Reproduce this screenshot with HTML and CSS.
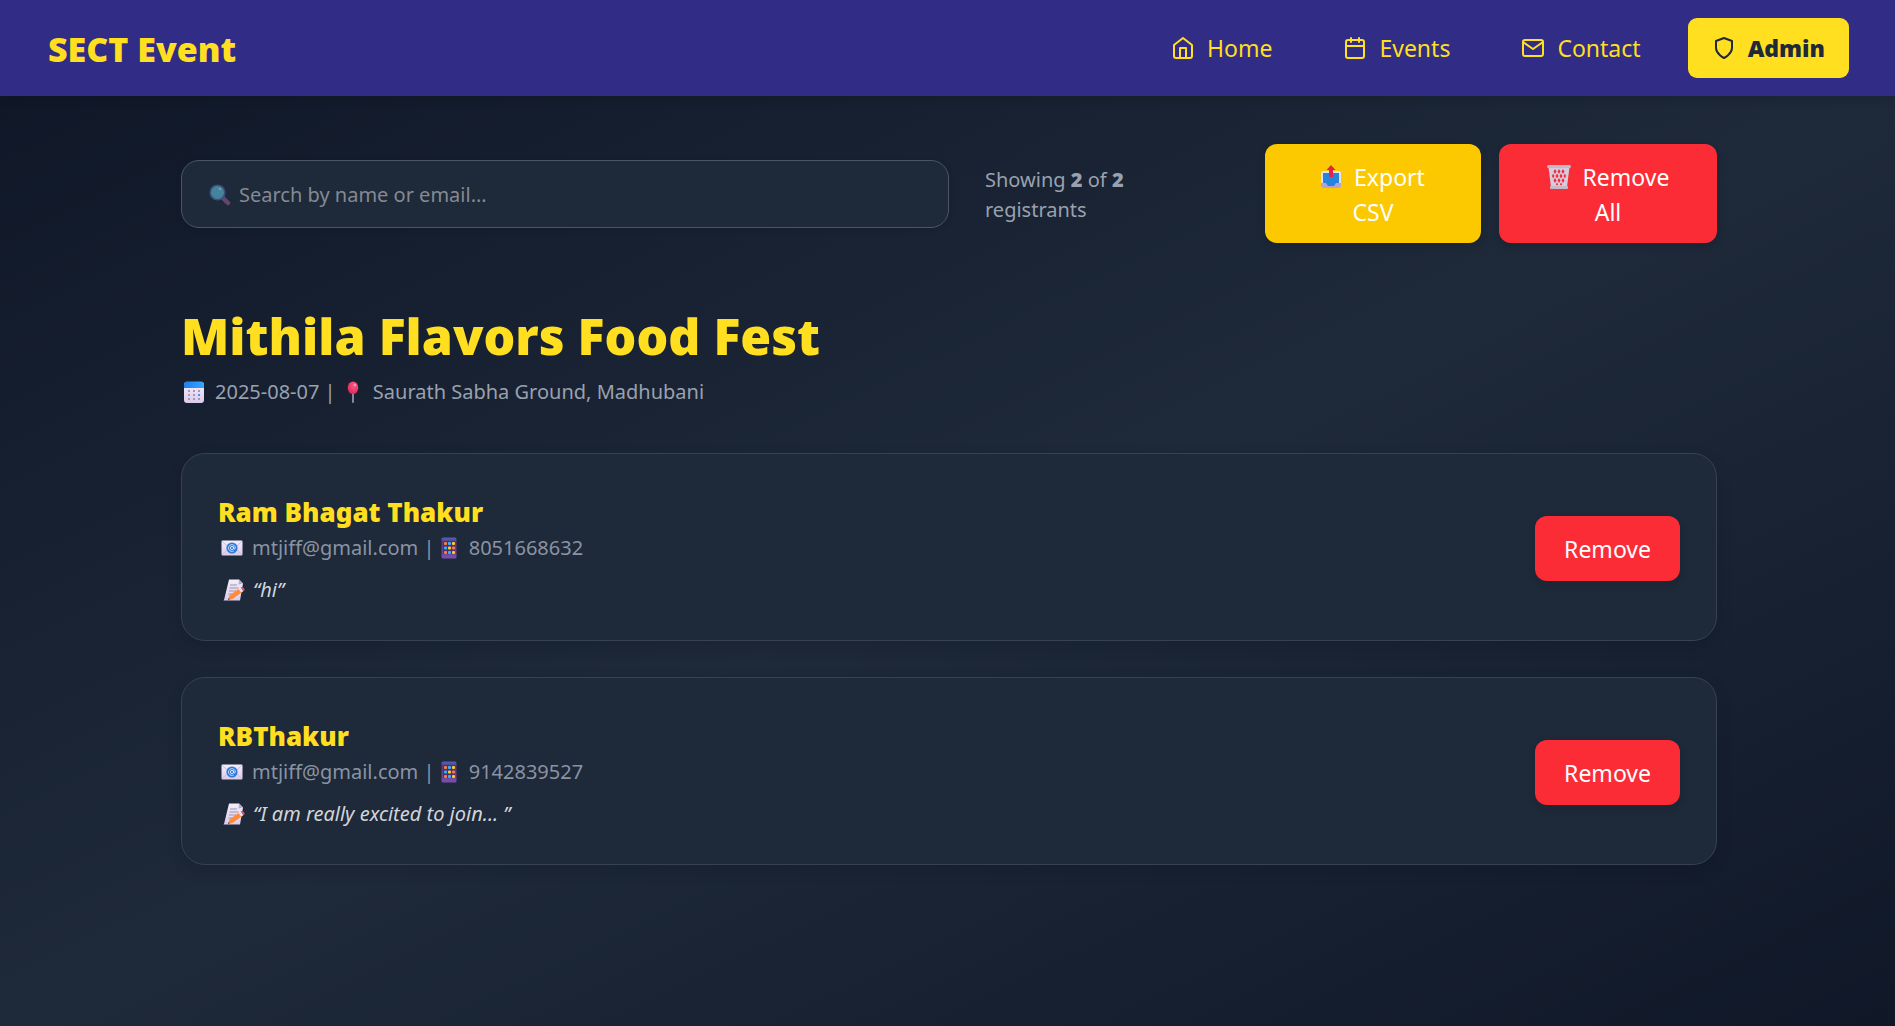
FILE: index.html
```html
<!DOCTYPE html>
<html lang="en">
<head>
<meta charset="utf-8">
<meta name="viewport" content="width=device-width, initial-scale=1">
<title>SECT Event – Registrants</title>
<link rel="stylesheet" href="styles.css">
</head>
<body>
<svg class="sprite" aria-hidden="true">
  <defs>
    <linearGradient id="calTop"><stop offset="0" stop-color="#1f7df0"/><stop offset="1" stop-color="#35a8ff"/></linearGradient>
    <linearGradient id="paper" x2="0" y2="1"><stop offset="0" stop-color="#f4eefb"/><stop offset="1" stop-color="#dccbec"/></linearGradient>
    <linearGradient id="phone" x2="0" y2="1"><stop offset="0" stop-color="#5362b8"/><stop offset=".25" stop-color="#5a3a78"/><stop offset="1" stop-color="#7a4fae"/></linearGradient>
    <radialGradient id="pin" cx=".6" cy=".3" r=".8"><stop offset="0" stop-color="#ff5a86"/><stop offset="1" stop-color="#dc1f58"/></radialGradient>
  </defs>
  <symbol id="mail" viewBox="0 0 22 16">
    <rect x=".5" y=".5" width="21" height="15" rx="1" fill="url(#paper)"/>
    <path d="M1 1l7 7M21 1l-7 7M1 15l6-6M21 15l-6-6" stroke="#c9b7dc" stroke-width=".8"/>
    <circle cx="11" cy="8" r="5.6" fill="#2f7bd8"/>
    <circle cx="11" cy="8" r="1.6" fill="none" stroke="#d5e4fa"/>
    <path d="M12.6 6.4v2.2q1.7 1 1.7-.6a3.4 3.4 0 1 0-1.6 2.9" fill="none" stroke="#d5e4fa" stroke-width=".9"/>
  </symbol>
  <symbol id="mobile" viewBox="0 0 16 22">
    <rect x=".5" y=".5" width="15" height="21" rx="1.5" fill="url(#phone)"/>
    <rect x="2" y="4" width="12" height="13" fill="#4e2f68"/>
    <g><rect x="3" y="5" width="3" height="3" rx="1" fill="#ff7b45"/><rect x="7" y="5" width="3" height="3" rx="1" fill="#2fb4ff"/><rect x="11" y="5" width="3" height="3" rx="1" fill="#ffc93d"/><rect x="3" y="9.500" width="3" height="3" rx="1" fill="#2fb4ff"/><rect x="7" y="9.500" width="3" height="3" rx="1" fill="#ffc93d"/><rect x="11" y="9.500" width="3" height="3" rx="1" fill="#ff7b45"/><rect x="3" y="14" width="3" height="3" rx="1" fill="#ff7b45"/><rect x="7" y="14" width="3" height="3" rx="1" fill="#2fb4ff"/><rect x="11" y="14" width="3" height="3" rx="1" fill="#ffc93d"/></g>
  </symbol>
  <symbol id="memo" viewBox="0 0 22 22">
    <path d="M6 .5h10l4 4L17 21.500H.5Q1.500 20 2 17Z" fill="url(#paper)"/>
    <path d="M16 .5l4 4-4.500 1Z" fill="#b9a9c8"/>
    <path d="M7 6h7M6.500 9h9M6 12h7M5.500 15h4" stroke="#9d93a8" stroke-width="1.200"/>
    <path d="M5 21l1.500-4.500 9-6.500 3 3.500-9 6.500Z" fill="#ff8a3a"/>
    <path d="M15.500 10l2-1.500 3 3.500-2 1.500Z" fill="#e8e2f0"/>
    <path d="M17.500 8.500l1.500-.5q3 1 2.500 3.500l-1 .5Z" fill="#ff4b4b"/>
    <path d="M5 21l.6-2 1.200 1.300Z" fill="#6b3a48"/>
  </symbol>
</svg>

<header class="navbar">
  <a class="brand" href="#">SECT Event</a>
  <nav class="nav">
    <a class="nav-link" href="#"><svg class="nav-icon" viewBox="0 0 24 24"><path d="M3 9l9-7 9 7v11a2 2 0 0 1-2 2H5a2 2 0 0 1-2-2z"/><path d="M9 22V12h6v10"/></svg>Home</a>
    <a class="nav-link" href="#"><svg class="nav-icon" viewBox="0 0 24 24"><rect x="3" y="4" width="18" height="18" rx="2"/><path d="M16 2v4M8 2v4M3 10h18"/></svg>Events</a>
    <a class="nav-link" href="#"><svg class="nav-icon" viewBox="0 0 24 24"><rect x="2" y="4" width="20" height="16" rx="2"/><path d="M22 6l-10 7L2 6"/></svg>Contact</a>
    <a class="nav-link nav-admin" href="#"><svg class="nav-icon" viewBox="0 0 24 24"><path d="M12 22s8-4 8-10V5l-8-3-8 3v7c0 6 8 10 8 10z"/></svg>Admin</a>
  </nav>
</header>

<main class="page">
  <div class="container">
    <div class="toolbar">
      <label class="search">
        <svg class="search-icon" viewBox="0 0 22 22" aria-hidden="true"><path d="M14 14l5 5" stroke="#8f5b91" stroke-width="4.500" stroke-linecap="round"/><circle cx="8.500" cy="8.500" r="7.300" fill="#5fc0dc" stroke="#4a6ba8" stroke-width="1.600"/><circle cx="11" cy="5" r="1.300" fill="#b4e6f2"/></svg>
        <input class="search-input" type="text" placeholder="Search by name or email..." aria-label="Search by name or email">
      </label>
      <p class="count">Showing <strong>2</strong> of <strong>2</strong> registrants</p>
      <div class="actions">
        <button class="btn btn-export" type="button"><svg class="emoji emoji-tray" viewBox="2 0 20 24" aria-hidden="true"><rect x="2" y="6" width="20" height="17" rx="2" fill="#e6e0ee"/><path d="M2 18h20v3q0 2-2 2H4q-2 0-2-2Z" fill="#b7a2cf"/><path d="M4 8h16v10h-3l-2 3H9l-2-3H4Z" fill="#2585dc"/><path d="M12 0l4.500 5H14v7h-4V5H7.500Z" fill="#e0244f"/></svg>Export CSV</button>
        <button class="btn btn-remove-all" type="button"><svg class="emoji emoji-bin" viewBox="0 0 24 24" aria-hidden="true"><path d="M1.500 2h21l-2.500 20H4Z" fill="#d6ccdc"/><g fill="#f02c40"><path d="M8 4l1.500 2.500L8 9 6.500 6.500ZM12 4l1.500 2.500L12 9l-1.500-2.500ZM16 4l1.500 2.500L16 9l-1.500-2.500Z"/><path d="M6 8.500L7.500 11 6 13.500 5 11ZM10 8.500l1.500 2.500-1.500 2.500L8.500 11ZM14 8.500l1.500 2.500-1.500 2.500-1.500-2.500ZM18 8.500l1 2.500-1 2.500-1.500-2.500Z"/><path d="M8 13l1.500 2.500L8 18l-1.500-2.500ZM12 13l1.500 2.500L12 18l-1.500-2.500ZM16 13l1.500 2.500L16 18l-1.500-2.500Z"/><path d="M10 17.500l1.200 2-1.200 1-1.200-1ZM14 17.500l1.200 2-1.200 1-1.200-1Z"/></g><rect x="0" y="0" width="24" height="3" rx="1.500" fill="#c2bac8"/><rect x="3" y="21" width="18" height="3" rx="1" fill="#c2bac8"/></svg>Remove All</button>
      </div>
    </div>

    <section>
      <h1 class="title">Mithila Flavors Food Fest</h1>
      <p class="meta"><svg class="emoji emoji-cal" viewBox="0 0 22 22" aria-hidden="true"><rect x="1" y="1" width="20" height="21" rx="3" fill="url(#paper)"/><path d="M1 7V4q0-3.500 3-3.500h14q3 0 3 3.500v3Z" fill="url(#calTop)"/><g fill="#a596b8"><path d="M5 9h2v2H5zM10 9h2v2h-2zM15 9h2v2h-2zM5 13h2v2H5zM10 13h2v2h-2zM5 17h2v2H5zM10 17h2v2h-2zM15 17h2v2h-2z"/></g><path d="M15 13h2v2h-2z" fill="#2f9bff"/></svg>2025-08-07 | <svg class="emoji emoji-pin" viewBox="0 0 14 22" aria-hidden="true"><path d="M7 12v9" stroke="#9a92a8" stroke-width="1.800" stroke-linecap="round"/><ellipse cx="7" cy="6.800" rx="5.300" ry="6.300" fill="url(#pin)"/><circle cx="9" cy="4" r="1.300" fill="#ff9db5"/></svg>Saurath Sabha Ground, Madhubani</p>

      <ul class="cards">
        <li class="card">
          <div>
            <h2 class="name">Ram Bhagat Thakur</h2>
            <p class="contact"><svg class="emoji emoji-mail"><use href="#mail"/></svg>mtjiff@gmail.com | <svg class="emoji emoji-mobile"><use href="#mobile"/></svg>8051668632</p>
            <p class="note"><svg class="emoji emoji-memo"><use href="#memo"/></svg>“hi”</p>
          </div>
          <button class="btn btn-remove" type="button">Remove</button>
        </li>
        <li class="card">
          <div>
            <h2 class="name">RBThakur</h2>
            <p class="contact"><svg class="emoji emoji-mail"><use href="#mail"/></svg>mtjiff@gmail.com | <svg class="emoji emoji-mobile"><use href="#mobile"/></svg>9142839527</p>
            <p class="note"><svg class="emoji emoji-memo"><use href="#memo"/></svg>“I am really excited to join... ”</p>
          </div>
          <button class="btn btn-remove" type="button">Remove</button>
        </li>
      </ul>
    </section>
  </div>
</main>
</body>
</html>
```
FILE: styles.css
```css
*, *::before, *::after { box-sizing: border-box; }

body {
  margin: 0;
  min-height: 100vh;
  display: flex;
  flex-direction: column;
  background: #101828;
  color: #fff;
  font-family: "Segoe UI", "Noto Sans", "Open Sans", sans-serif;
  font-size: 20px;
  line-height: 30px;
}

h1, h2, p, ul { margin: 0; padding: 0; }
a { color: inherit; text-decoration: none; }
.sprite { position: absolute; width: 0; height: 0; }

.navbar {
  display: flex;
  align-items: center;
  justify-content: space-between;
  min-height: 96px;
  padding: 18px 46px 18px 48px;
  background: #312c85;
  color: #ffdf20;
  box-shadow: 0 4px 9px rgba(0, 0, 0, .1);
  position: relative;
}
.brand { padding-top: 2px; font-size: 34px; line-height: 48px; font-weight: 900; }
.nav { display: flex; gap: 23px; }
.nav-link {
  display: flex;
  align-items: center;
  gap: 12px;
  padding: 12px 24px;
  border-radius: 9px;
  font-size: 23px;
  line-height: 36px;
}
.nav-admin { background: #ffdf20; color: #1e2939; font-weight: 900; }
.nav-icon {
  width: 24px;
  height: 24px;
  fill: none;
  stroke: currentColor;
  stroke-width: 2;
  stroke-linecap: round;
  stroke-linejoin: round;
}

.page {
  flex: 1;
  padding: 48px 24px 48px 27px;
  background: linear-gradient(to bottom right, #101828, #1e2939, #101828);
}
.container { max-width: 1536px; margin: 0 auto; }

.toolbar { display: flex; align-items: center; gap: 36px; }
.search {
  flex: 0 0 50%;
  display: flex;
  align-items: center;
  gap: 8px;
  height: 68px;
  padding: 2px 27px 0;
  border: 1px solid #4a5565;
  border-radius: 18px;
  background: #1e2939;
  box-shadow: 0 2px 6px rgba(0, 0, 0, .1);
}
.search-icon { width: 22px; height: 22px; opacity: .6; }
.search-input {
  flex: 1;
  min-width: 0;
  padding: 0;
  border: 0;
  outline: 0;
  background: none;
  color: #fff;
  font: inherit;
}
.search-input::placeholder { color: #848a94; opacity: 1; }
.count { flex: 1; padding: 2px 60px 0 0; color: #99a1af; }
.count strong { font-weight: 900; }
.actions { display: flex; gap: 18px; }

.btn {
  border: 0;
  border-radius: 12px;
  color: #fff;
  font: inherit;
  font-size: 23px;
  line-height: 35px;
  box-shadow: 0 3px 8px rgba(0, 0, 0, .12);
  cursor: pointer;
}
.btn-export { width: 216px; padding: 16px 36px 13px; background: #fcc800; }
.btn-remove-all { width: 218px; padding: 16px 36px 13px; background: #fb2c36; }
.btn-remove { padding: 16px 29px 14px; background: #fb2c36; }

.title {
  margin-top: 60px;
  color: #ffdf20;
  font-size: 50px;
  line-height: 66px;
  font-weight: 900;
}
.meta { margin-top: 8px; color: #99a1af; }

.emoji { height: 22px; vertical-align: -4px; }
.emoji-tray { width: 20px; height: 24px; margin-right: 13px; vertical-align: -3px; }
.emoji-bin { width: 24px; height: 24px; margin-right: 12px; vertical-align: -3px; }
.emoji-cal { width: 22px; margin: 0 10px 0 2px; }
.emoji-pin { width: 14px; margin: 0 13px 0 5px; }
.emoji-mail { width: 22px; height: 16px; margin: 0 9px 0 3px; vertical-align: -1px; }
.emoji-mobile { width: 16px; margin: 0 12px 0 1px; }
.emoji-memo { width: 22px; margin: 0 8px 0 5px; }

.cards { margin-top: 46px; list-style: none; display: grid; gap: 36px; }
.card {
  display: flex;
  align-items: center;
  justify-content: space-between;
  min-height: 188px;
  padding: 37px 36px 35px;
  border: 1px solid #364153;
  border-radius: 24px;
  background: #1e2939;
  box-shadow: 0 6px 16px rgba(0, 0, 0, .12);
}
.name { color: #ffdf20; font-size: 26px; line-height: 42px; font-weight: 900; }
.contact { color: #8a93a3; }
.note { margin-top: 12px; color: #d1d5dc; font-style: italic; }
```
